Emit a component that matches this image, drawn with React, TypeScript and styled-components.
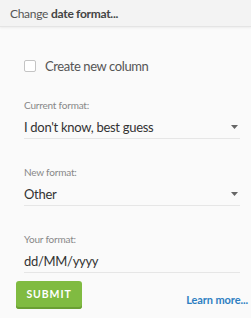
import styled, { createGlobalStyle } from 'styled-components'

const GlobalStyle = createGlobalStyle`
  html, body {
    margin: 0;
    padding: 0;
    background: #fafafa;
  }
  body {
    font-family: Lato, "Open Sans", "Liberation Sans", sans-serif;
    color: #333;
  }
`

function Caret() {
  return (
    <svg width="7" height="4" viewBox="0 0 7 4">
      <path d="M0 0 H7 L3.5 4 Z" fill="#666" />
    </svg>
  )
}

interface SelectFieldProps {
  label: string
  value: string
}

function SelectField({ label, value }: SelectFieldProps) {
  return (
    <Field>
      <FieldLabel>{label}</FieldLabel>
      <FieldRow>
        <FieldValue>{value}</FieldValue>
        <Caret />
      </FieldRow>
    </Field>
  )
}

export default function App() {
  return (
    <>
      <GlobalStyle />
      <Panel>
        <Header>
          Change <strong>date format...</strong>
        </Header>

        <Body>
          <CheckRow>
            <CheckBox />
            <CheckLabel>Create new column</CheckLabel>
          </CheckRow>

          <SelectField label="Current format:" value="I don't know, best guess" />
          <SelectField label="New format:" value="Other" />

          <Field>
            <FieldLabel>Your format:</FieldLabel>
            <FieldRow>
              <FieldValue>dd/MM/yyyy</FieldValue>
            </FieldRow>
          </Field>
        </Body>

        <Footer>
          <SubmitButton>Submit</SubmitButton>
          <LearnMore>Learn more...</LearnMore>
        </Footer>
      </Panel>
    </>
  )
}

const Panel = styled.div`
  width: 251px;
  height: 318px;
  display: flex;
  flex-direction: column;
  background: #fafafa;
  overflow: hidden;
`

const Header = styled.div`
  height: 27px;
  box-sizing: border-box;
  padding: 0 10px;
  display: flex;
  align-items: center;
  gap: 3px;
  background: #f3f3f3;
  border-bottom: 1px solid #e4e4e4;
  box-shadow: 0 1px 2px rgba(0, 0, 0, 0.06);
  font-size: 12px;
  letter-spacing: -0.3px;
  color: #555;

  strong {
    font-weight: 700;
    color: #444;
  }
`

const Body = styled.div`
  display: flex;
  flex-direction: column;
  padding: 32px 11px 0 24px;
`

const CheckRow = styled.div`
  display: flex;
  align-items: center;
  gap: 9px;
  height: 14px;
  margin-bottom: 26px;
`

const CheckBox = styled.span`
  width: 10px;
  height: 10px;
  border: 1px solid #c4c4c4;
  border-radius: 2px;
  background: #fff;
`

const CheckLabel = styled.span`
  font-size: 13px;
  letter-spacing: -0.4px;
  color: #555;
`

const Field = styled.div`
  display: flex;
  flex-direction: column;
  margin-bottom: 27px;
`

const FieldLabel = styled.div`
  font-size: 10px;
  letter-spacing: -0.2px;
  color: #888;
  line-height: 13px;
  margin-bottom: 3px;
`

const FieldRow = styled.div`
  display: flex;
  align-items: center;
  justify-content: space-between;
  height: 23px;
  padding-right: 2px;
  border-bottom: 1px solid #e6e6e6;
`

const FieldValue = styled.span`
  font-size: 13px;
  letter-spacing: -0.3px;
  color: #333;
`

const Footer = styled.div`
  display: flex;
  align-items: flex-end;
  justify-content: space-between;
  padding: 0 3px 0 16px;
  margin-top: -19px;
`

const SubmitButton = styled.button`
  width: 66px;
  height: 28px;
  border: none;
  border-radius: 3px;
  background: #80bb41;
  box-shadow: inset 0 -2px 0 #6a9f33;
  color: #fff;
  font-family: inherit;
  font-size: 10.5px;
  font-weight: 700;
  letter-spacing: 0.9px;
  text-transform: uppercase;
  padding: 0 0 2px;
`

const LearnMore = styled.a`
  font-size: 11px;
  font-weight: 700;
  letter-spacing: -0.1px;
  color: #2e7fc2;
  margin-bottom: 3px;
  cursor: pointer;
`
